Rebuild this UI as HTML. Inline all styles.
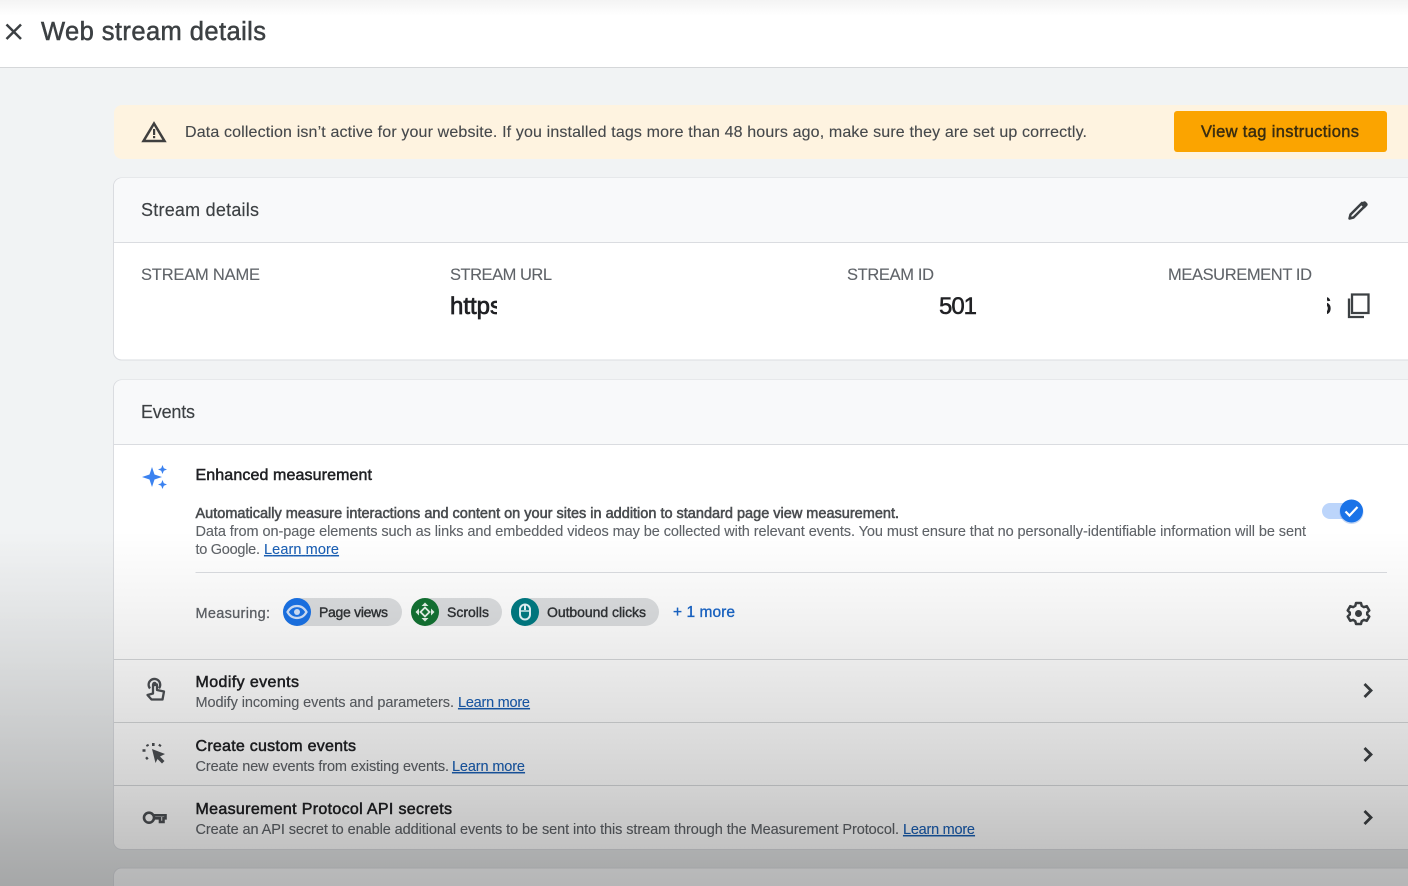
<!DOCTYPE html>
<html><head><meta charset="utf-8"><title>Web stream details</title>
<style>
html,body{margin:0;padding:0;width:1408px;height:886px;overflow:hidden;background:#f1f3f4}
svg{display:block}
text{font-family:"Liberation Sans",sans-serif}
.h{fill:#3c4043;font-size:18px;stroke:#3c4043;stroke-width:.15px}
.l{fill:#5f6368;font-size:16.5px;stroke:#5f6368;stroke-width:.1px}
.t{fill:#202124;font-size:16px;stroke:#202124;stroke-width:.5px}
.s{fill:#5f6368;font-size:14.5px;stroke:#5f6368;stroke-width:.12px}
.a{fill:#1a5fb4;font-size:14.5px;text-decoration:underline;stroke:#1a5fb4;stroke-width:.1px}
.c{fill:#303336;font-size:14px;stroke:#303336;stroke-width:.4px}
</style></head><body>
<svg width="1408" height="886" viewBox="0 0 1408 886" xmlns="http://www.w3.org/2000/svg">
<defs>
<linearGradient id="ov" gradientUnits="userSpaceOnUse" x1="0" y1="530" x2="0" y2="886">
<stop offset="0" stop-color="#000" stop-opacity="0"/>
<stop offset=".197" stop-color="#000" stop-opacity=".04"/>
<stop offset=".365" stop-color="#000" stop-opacity=".08"/>
<stop offset=".534" stop-color="#000" stop-opacity=".125"/>
<stop offset=".716" stop-color="#000" stop-opacity=".175"/>
<stop offset=".899" stop-color="#000" stop-opacity=".24"/>
<stop offset="1" stop-color="#000" stop-opacity=".27"/>
</linearGradient>
<linearGradient id="pg" gradientUnits="userSpaceOnUse" x1="0" y1="530" x2="0" y2="886">
<stop offset="0" stop-color="#000" stop-opacity="0"/>
<stop offset="1" stop-color="#000" stop-opacity=".06"/>
</linearGradient>
<linearGradient id="tp" x1="0" y1="0" x2="0" y2="1"><stop offset="0" stop-color="#f4f4f4"/><stop offset="1" stop-color="#fff"/></linearGradient>
<clipPath id="c1"><rect x="440" y="285" width="57" height="40"/></clipPath>
<clipPath id="c2"><rect x="1327" y="285" width="4" height="40"/></clipPath>
</defs>
<rect width="1408" height="886" fill="#f1f3f4"/>
<rect width="1408" height="886" fill="url(#pg)"/>
<!-- top bar -->
<rect width="1408" height="67" fill="#fff"/>
<rect width="1408" height="16" fill="url(#tp)"/>
<rect y="67" width="1408" height="1" fill="#d5d7d9"/>
<path d="M6.500 24.500L21 39M21 24.500L6.500 39" stroke="#3c4043" stroke-width="2.500" fill="none"/>
<text x="41" y="40" font-size="25.500" fill="#3c4043" stroke="#3c4043" stroke-width=".5" textLength="225" lengthAdjust="spacing">Web stream details</text>
<!-- banner -->
<rect x="114" y="105" width="1320" height="54" rx="8" fill="#fef3e0"/>
<path d="M154 123.500L164.500 141H143.500Z" fill="none" stroke="#3f3f3f" stroke-width="2.500"/>
<rect x="153" y="129" width="2.200" height="6" fill="#3f3f3f"/><rect x="153" y="136" width="2.200" height="2.200" fill="#3f3f3f"/>
<text x="185" y="137" font-size="16" fill="#45484b" stroke="#45484b" stroke-width=".12" textLength="902" lengthAdjust="spacing">Data collection isn’t active for your website. If you installed tags more than 48 hours ago, make sure they are set up correctly.</text>
<rect x="1174" y="111" width="213" height="41" rx="3" fill="#fba400"/>
<text x="1201" y="137" font-size="16.500" fill="#3a2d10" stroke="#3a2d10" stroke-width=".45" textLength="158" lengthAdjust="spacing">View tag instructions</text>
<!-- stream details card -->
<rect x="113.500" y="178" width="1320" height="182" rx="8" fill="#fff" stroke="#dadce0"/>
<path d="M114 242V186a8 8 0 0 1 8-8H1408V242Z" fill="#f8f9fa"/>
<rect x="114" y="242" width="1294" height="1" fill="#dadce0"/>
<text class="h" x="141" y="216" textLength="118" lengthAdjust="spacing">Stream details</text>
<path d="M1349.500 218.500L1350.500 214.500L1362 203L1365 206L1353.500 217.500Z" fill="none" stroke="#3c4043" stroke-width="2.500" stroke-linejoin="round"/>
<path d="M1360.500 204.500L1363 202a2.200 2.200 0 0 1 3 0l1 1a2.200 2.200 0 0 1 0 3l-2.500 2.500Z" fill="#3c4043"/>
<text class="l" x="141" y="280" textLength="119" lengthAdjust="spacing">STREAM NAME</text>
<text class="l" x="450" y="280" textLength="102" lengthAdjust="spacing">STREAM URL</text>
<text class="l" x="847" y="280" textLength="87" lengthAdjust="spacing">STREAM ID</text>
<text class="l" x="1168" y="280" textLength="144" lengthAdjust="spacing">MEASUREMENT ID</text>
<g clip-path="url(#c1)"><text x="450" y="314" font-size="24" fill="#202124" stroke="#202124" stroke-width=".7">https</text></g>
<text x="939" y="314" font-size="24" fill="#202124" stroke="#202124" stroke-width=".5" textLength="38" lengthAdjust="spacing">501</text>
<g clip-path="url(#c2)"><text x="1318" y="314" font-size="24" fill="#202124" stroke="#202124" stroke-width=".7">6</text></g>
<path d="M1352 294.500h16.500v18.500H1352Z" fill="none" stroke="#3c4043" stroke-width="2.300"/>
<path d="M1349 298.500v18.500h15" fill="none" stroke="#3c4043" stroke-width="2.300"/>
<!-- events card -->
<rect x="113.500" y="380" width="1320" height="469.500" rx="8" fill="#fff" stroke="#dadce0"/>
<path d="M114 444V388a8 8 0 0 1 8-8H1408V444Z" fill="#f8f9fa"/>
<rect x="114" y="444" width="1294" height="1" fill="#dadce0"/>
<text class="h" x="141" y="418" textLength="54" lengthAdjust="spacing">Events</text>
<path d="M152 467l2.500 7.500 7.500 2.500-7.500 2.500-2.500 7.500-2.500-7.500-7.500-2.500 7.500-2.500Z" fill="#3b82f0"/>
<path d="M162.500 465l1.300 3.200 3.200 1.300-3.200 1.300-1.300 3.200-1.300-3.200-3.200-1.300 3.200-1.300Z" fill="#3b82f0"/>
<path d="M162.500 480l1.300 3.200 3.200 1.300-3.200 1.300-1.300 3.200-1.300-3.200-3.200-1.300 3.200-1.300Z" fill="#3b82f0"/>
<text class="t" x="195.500" y="480" textLength="176.500" lengthAdjust="spacing">Enhanced measurement</text>
<text x="195.500" y="518" font-size="14.500" fill="#4a4d50" stroke="#4a4d50" stroke-width=".55" textLength="703.500" lengthAdjust="spacing">Automatically measure interactions and content on your sites in addition to standard page view measurement.</text>
<text class="s" x="195.500" y="536" textLength="1110.500" lengthAdjust="spacing">Data from on-page elements such as links and embedded videos may be collected with relevant events. You must ensure that no personally-identifiable information will be sent</text>
<text class="s" x="195.500" y="554" textLength="64.500" lengthAdjust="spacing">to Google.</text>
<text class="a" x="264" y="554" textLength="75" lengthAdjust="spacing">Learn more</text>
<rect x="1322" y="503" width="30" height="16" rx="8" fill="#bcd5fb"/>
<circle cx="1351.500" cy="512" r="12" fill="#1a5fd0" opacity=".25"/>
<circle cx="1351.500" cy="511" r="11.500" fill="#1a73e8"/>
<path d="M1345.500 511.500l4 4 8-8.500" fill="none" stroke="#fff" stroke-width="2.200"/>
<rect x="195.500" y="572" width="1191.500" height="1" fill="#dadce0"/>
<text class="s" x="195.500" y="618" font-size="15" textLength="74.500" lengthAdjust="spacing" style="stroke-width:.3px">Measuring:</text>
<!-- chips -->
<rect x="283" y="598" width="119" height="28" rx="14" fill="#dcdee0"/>
<circle cx="297" cy="612" r="14" fill="#1a73e8"/>
<path d="M287.500 612c2.500-4.500 5.800-6 9.500-6s7 1.500 9.500 6c-2.500 4.500-5.800 6-9.500 6s-7-1.500-9.500-6Z" fill="none" stroke="#d2e3fc" stroke-width="2.300"/>
<circle cx="297" cy="612" r="3" fill="#d2e3fc"/>
<text class="c" x="319" y="617" textLength="69" lengthAdjust="spacing">Page views</text>
<rect x="411" y="598" width="91" height="28" rx="14" fill="#dcdee0"/>
<circle cx="425" cy="612" r="14" fill="#137333"/>
<path d="M425 602.500l3.500 3.500h-7ZM425 621.500l3.500-3.500h-7ZM415.500 612l3.500-3.500v7ZM434.500 612l-3.500-3.500v7Z" fill="#e6f4ea"/>
<path d="M425 607.500l4.500 4.500-4.500 4.500-4.500-4.500Z" fill="none" stroke="#e6f4ea" stroke-width="1.800"/>
<text class="c" x="447" y="617" textLength="42" lengthAdjust="spacing">Scrolls</text>
<rect x="511" y="598" width="148" height="28" rx="14" fill="#dcdee0"/>
<circle cx="525" cy="612" r="14" fill="#007b83"/>
<rect x="520" y="604.500" width="10" height="15" rx="5" fill="none" stroke="#e4f7fb" stroke-width="2"/>
<path d="M525 605v5" stroke="#e4f7fb" stroke-width="2"/><path d="M520 611h10" stroke="#e4f7fb" stroke-width="1.400"/>
<text class="c" x="547" y="617" textLength="99" lengthAdjust="spacing">Outbound clicks</text>
<text x="673" y="617" font-size="15.500" fill="#1a66c8" stroke="#1a66c8" stroke-width=".35" textLength="62" lengthAdjust="spacing">+ 1 more</text>
<!-- gear -->
<g transform="translate(1358.500 613.500)" fill="none" stroke="#3c4043" stroke-width="2.500" stroke-linejoin="round">
<path d="M-2.500-10.500h5l.7 2.800 2.300 1.300 2.800-.9 2.500 4.300-2.100 2v2l2.100 2-2.500 4.300-2.800-.9-2.300 1.300-.7 2.800h-5l-.7-2.800-2.300-1.300-2.800.9-2.500-4.300 2.100-2v-2l-2.100-2 2.500-4.300 2.800.9 2.300-1.300Z"/>
<circle r="3.500" fill="#3c4043" stroke="none"/></g>
<!-- rows -->
<rect x="114" y="659" width="1294" height="1" fill="#d6d8da"/>
<rect x="114" y="722" width="1294" height="1" fill="#d6d8da"/>
<rect x="114" y="785" width="1294" height="1" fill="#d6d8da"/>
<text class="t" x="195.500" y="687" textLength="103.500" lengthAdjust="spacing">Modify events</text>
<text class="s" x="195.500" y="707" textLength="258.500" lengthAdjust="spacing">Modify incoming events and parameters.</text>
<text class="a" x="458" y="707" textLength="72" lengthAdjust="spacing">Learn more</text>
<text class="t" x="195.500" y="751" textLength="160.500" lengthAdjust="spacing">Create custom events</text>
<text class="s" x="195.500" y="771" textLength="253.500" lengthAdjust="spacing">Create new events from existing events.</text>
<text class="a" x="452" y="771" textLength="73" lengthAdjust="spacing">Learn more</text>
<text class="t" x="195.500" y="814" textLength="256.500" lengthAdjust="spacing">Measurement Protocol API secrets</text>
<text class="s" x="195.500" y="834" textLength="703.500" lengthAdjust="spacing">Create an API secret to enable additional events to be sent into this stream through the Measurement Protocol.</text>
<text class="a" x="903" y="834" textLength="72" lengthAdjust="spacing">Learn more</text>
<!-- row icons -->
<g fill="none" stroke="#4d5054" stroke-width="2.300" stroke-linejoin="round">
<path d="M150 688.500a5.800 5.800 0 1 1 9 -.2"/>
<path d="M153 684.500v9l-5.500 1.500 4 4.500h11l1.500-8-7-1.500v-5.500Z"/>
</g>
<circle cx="154.500" cy="684" r="2.300" fill="#4d5054"/>
<path d="M152 749L165 754L160 756.500L164.500 761L162 763.500L157.500 759L155.500 763Z" fill="#4d5054"/>
<g stroke="#4d5054" stroke-width="2.600"><path d="M147 744.500l1 1.800M153.300 743v3M160.500 744.500l-1.200 1.800M142.500 750.500h3M146 759l1.800-1.500"/></g>
<g fill="none" stroke="#4d5054" stroke-width="2.600"><circle cx="149" cy="817.700" r="5"/><path d="M154 815.300h11.500v3h-2v3.700h-3.500v-3.700h-6"/></g>
<g fill="none" stroke="#3c4043" stroke-width="2.800"><path d="M1364.500 684l6.500 6.500-6.500 6.500"/><path d="M1364.500 748l6.500 6.500-6.500 6.500"/><path d="M1364.500 811l6.500 6.500-6.500 6.500"/></g>
<!-- next card -->
<rect x="113.500" y="868" width="1320" height="40" rx="8" fill="#f8f9fa" stroke="#dadce0"/>
<!-- dim overlay -->
<rect y="530" width="1408" height="356" fill="url(#ov)"/>
</svg>
</body></html>
